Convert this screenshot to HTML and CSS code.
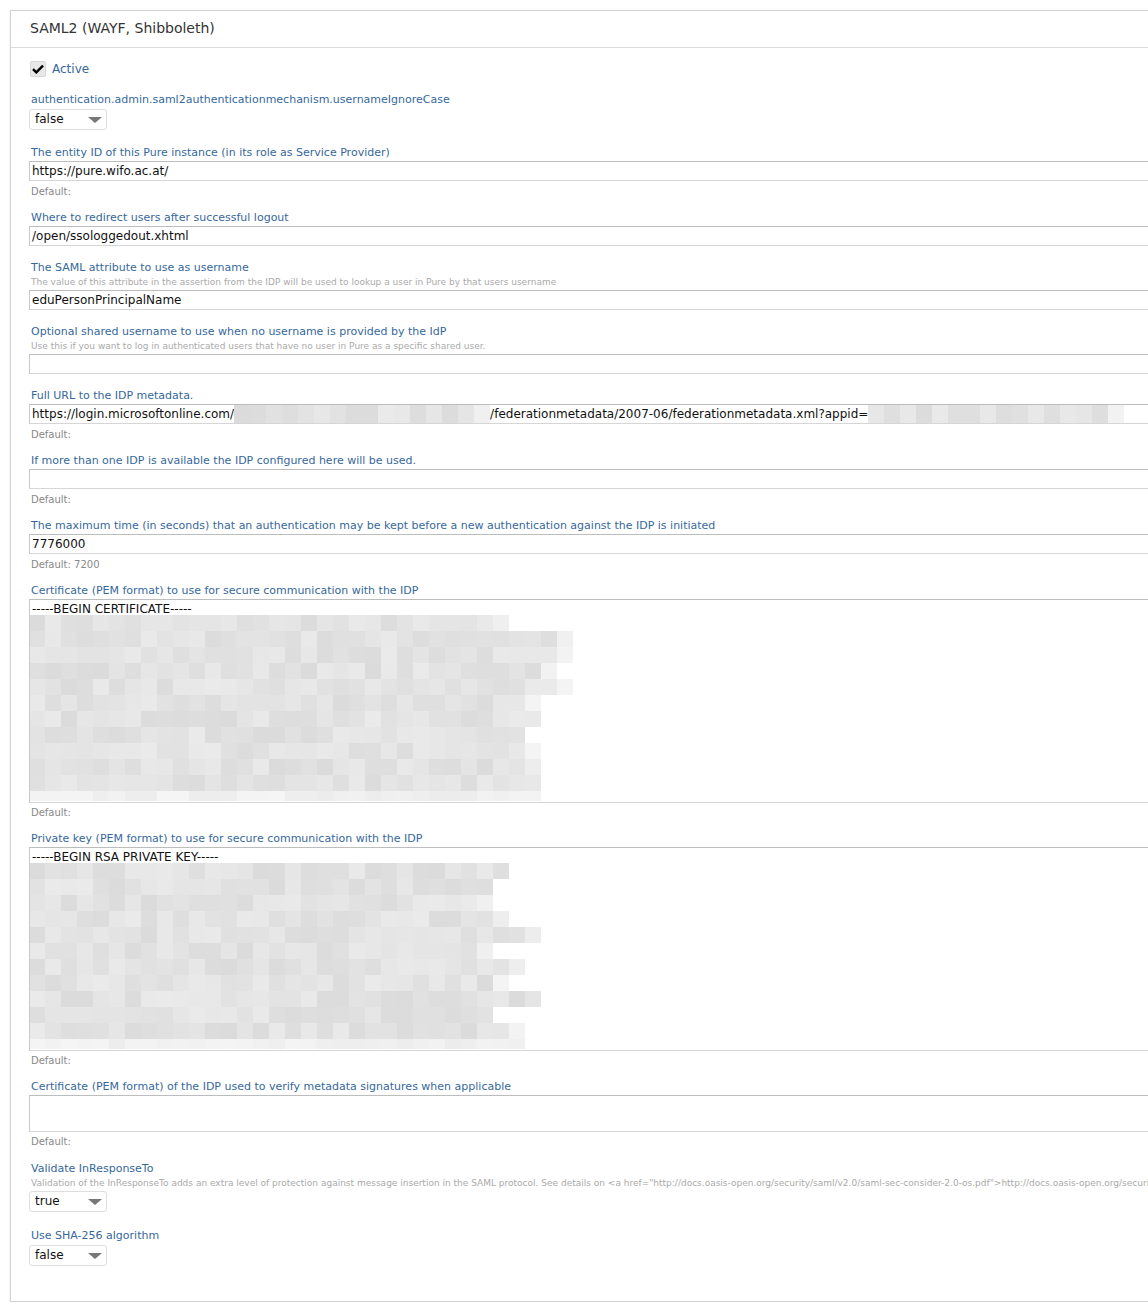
FILE: index.html
```html
<!DOCTYPE html>
<html lang="en">
<head>
    <meta charset="UTF-8" />
    <title>SAML2 (WAYF, Shibboleth)</title>
    <link rel="stylesheet" href="styles.css">
</head>
<body>
    <div class="panel">
        <div class="panel-header">
            <h2>SAML2 (WAYF, Shibboleth)</h2>
        </div>
        <div class="panel-body">
            <label class="checkbox-row">
                <span class="checkbox">
                    <svg width="12" height="10" viewBox="0 0 12 10"><path d="M1 5.2 L4.3 8.4 L11 1.6" fill="none" stroke="#000" stroke-width="2.4"/></svg>
                </span>
                <span class="checkbox-text">Active</span>
            </label>

            <div class="field">
                <div class="field-label">authentication.admin.saml2authenticationmechanism.usernameIgnoreCase</div>
                <div class="select">false<span class="select-arrow"></span></div>
            </div>

            <div class="field with-default">
                <div class="field-label">The entity ID of this Pure instance (in its role as Service Provider)</div>
                <div class="text-input">https://pure.wifo.ac.at/</div>
                <div class="field-default">Default:</div>
            </div>

            <div class="field">
                <div class="field-label">Where to redirect users after successful logout</div>
                <div class="text-input">/open/ssologgedout.xhtml</div>
            </div>

            <div class="field">
                <div class="field-label">The SAML attribute to use as username</div>
                <div class="field-help">The value of this attribute in the assertion from the IDP will be used to lookup a user in Pure by that users username</div>
                <div class="text-input">eduPersonPrincipalName</div>
            </div>

            <div class="field">
                <div class="field-label">Optional shared username to use when no username is provided by the IdP</div>
                <div class="field-help">Use this if you want to log in authenticated users that have no user in Pure as a specific shared user.</div>
                <div class="text-input"></div>
            </div>

            <div class="field with-default">
                <div class="field-label">Full URL to the IDP metadata.</div>
                <div class="text-input">https://login.microsoftonline.com/<span class="mosaic-inline" data-cells="16"></span>/federationmetadata/2007-06/federationmetadata.xml?appid=<span class="mosaic-inline" data-cells="16"></span></div>
                <div class="field-default">Default:</div>
            </div>

            <div class="field with-default">
                <div class="field-label">If more than one IDP is available the IDP configured here will be used.</div>
                <div class="text-input"></div>
                <div class="field-default">Default:</div>
            </div>

            <div class="field with-default">
                <div class="field-label">The maximum time (in seconds) that an authentication may be kept before a new authentication against the IDP is initiated</div>
                <div class="text-input">7776000</div>
                <div class="field-default">Default: 7200</div>
            </div>

            <div class="field with-default">
                <div class="field-label">Certificate (PEM format) to use for secure communication with the IDP</div>
                <div class="text-area">
                    <div class="text-line">-----BEGIN CERTIFICATE-----</div>
                    <div class="mosaic" data-rows="30,34,34,33,34,32,32,31,32,32,32,32" data-seed="7"></div>
                </div>
                <div class="field-default">Default:</div>
            </div>

            <div class="field with-default">
                <div class="field-label">Private key (PEM format) to use for secure communication with the IDP</div>
                <div class="text-area">
                    <div class="text-line">-----BEGIN RSA PRIVATE KEY-----</div>
                    <div class="mosaic" data-rows="30,29,29,30,32,29,31,30,32,29,31,31" data-seed="19"></div>
                </div>
                <div class="field-default">Default:</div>
            </div>

            <div class="field with-default">
                <div class="field-label">Certificate (PEM format) of the IDP used to verify metadata signatures when applicable</div>
                <div class="text-area small"></div>
                <div class="field-default">Default:</div>
            </div>

            <div class="field field-spaced">
                <div class="field-label">Validate InResponseTo</div>
                <div class="field-help">Validation of the InResponseTo adds an extra level of protection against message insertion in the SAML protocol. See details on &lt;a href="http://docs.oasis-open.org/security/saml/v2.0/saml-sec-consider-2.0-os.pdf"&gt;http://docs.oasis-open.org/security/saml/v2.0/saml-sec-consider-2.0-os.pdf&lt;/a&gt;</div>
                <div class="select">true<span class="select-arrow"></span></div>
            </div>

            <div class="field">
                <div class="field-label">Use SHA-256 algorithm</div>
                <div class="select">false<span class="select-arrow"></span></div>
            </div>
        </div>
    </div>

    <script>
        // blurred (pixelated) secrets, drawn as grey squares
        let seed = 1;
        function rand() {
            seed = (seed * 16807) % 2147483647;
            return seed / 2147483647;
        }

        function grey(light) {
            const v = Math.round(light ? 236 + rand() * 9 : 219 + rand() * 15);
            return `rgb(${v},${v},${v})`;
        }

        document.querySelectorAll('.mosaic').forEach(box => {
            seed = parseInt(box.dataset.seed);
            const rows = box.dataset.rows.split(',').map(Number);
            rows.forEach((count, r) => {
                const row = document.createElement('div');
                row.className = 'mosaic-row';
                if (r === rows.length - 1) row.classList.add('last');
                for (let i = 0; i < count; i++) {
                    const cell = document.createElement('span');
                    cell.className = 'mosaic-cell';
                    const light = r === rows.length - 1 || (i === count - 1 && rand() > 0.5);
                    cell.style.background = grey(light);
                    row.appendChild(cell);
                }
                box.appendChild(row);
            });
        });

        seed = 31;
        document.querySelectorAll('.mosaic-inline').forEach(box => {
            const count = parseInt(box.dataset.cells);
            for (let i = 0; i < count; i++) {
                const cell = document.createElement('span');
                cell.className = 'mosaic-cell tall';
                cell.style.background = grey(i === count - 1);
                box.appendChild(cell);
            }
        });
    </script>
</body>
</html>
```

FILE: styles.css
```css
html,
body {
    margin: 0;
    background: #fff;
    overflow: hidden;
    font-family: "DejaVu Sans", "Noto Sans", sans-serif;
}

.panel {
    margin: 10px 0 0 10px;
    width: 1200px;
    border: 1px solid #d2d2d2;
    box-shadow: 0 1px 3px rgba(0, 0, 0, 0.08);
    background: #fff;
}

.panel-header {
    border-bottom: 1px solid #dcdcdc;
    padding: 0 19px 1px;
}

.panel-header h2 {
    margin: 0;
    font-size: 14px;
    font-weight: normal;
    line-height: 35px;
    color: #333;
}

.panel-body {
    padding: 13px 18px 34px 18px;
}

.checkbox-row {
    display: flex;
    align-items: center;
    height: 16px;
    margin-bottom: 15px;
    padding-left: 1px;
}

.checkbox {
    width: 16px;
    height: 16px;
    box-sizing: border-box;
    background: #e8e8e8;
    border: 1px solid #d8d8d8;
    border-radius: 2px;
    display: flex;
    align-items: center;
    justify-content: center;
}

.checkbox-text {
    margin-left: 6px;
    font-size: 12px;
    color: #36689c;
}

.field {
    display: flow-root;
    margin-bottom: 14px;
}

.field.with-default {
    margin-bottom: 12px;
}

.field.field-spaced {
    padding-top: 1px;
    margin-bottom: 15px;
}

.field:last-child {
    margin-bottom: 0;
}

.field-label {
    font-size: 11px;
    line-height: 15px;
    color: #36689c;
    padding-left: 2px;
    margin-bottom: 1px;
    white-space: nowrap;
}

.field-help {
    font-size: 9px;
    line-height: 12px;
    color: #aaa;
    padding-left: 2px;
    margin-bottom: 2px;
    white-space: nowrap;
}

.field-default {
    font-size: 10px;
    line-height: 12px;
    color: #888;
    padding-left: 2px;
    margin-top: 5px;
}

.text-area + .field-default {
    margin-top: 4px;
}

.text-input {
    height: 20px;
    box-sizing: border-box;
    border: 1px solid #d6d6d6;
    border-top-color: #bdbdbd;
    border-left-color: #c8c8c8;
    padding: 0 2px;
    font-size: 12px;
    line-height: 20px;
    color: #111;
    white-space: nowrap;
    overflow: hidden;
    display: flex;
    align-items: center;
}

.text-area {
    height: 204px;
    box-sizing: border-box;
    border: 1px solid #d6d6d6;
    border-top-color: #bdbdbd;
    border-left-color: #c8c8c8;
    padding: 0 2px;
    font-size: 12px;
    color: #111;
    overflow: hidden;
}

.text-area.small {
    height: 37px;
}

.text-line {
    padding-top: 4px;
    line-height: 11px;
}

.mosaic {
    margin-left: -3px;
}

.mosaic-row {
    display: flex;
    height: 16px;
}

.mosaic-row.last {
    height: 10px;
}

.mosaic-cell {
    width: 16px;
    flex: none;
}

.mosaic-inline {
    display: flex;
    height: 18px;
}

.mosaic-cell.tall {
    height: 18px;
}

.select {
    position: relative;
    width: 78px;
    height: 21px;
    margin-top: 2px;
    margin-bottom: 1px;
    box-sizing: border-box;
    border: 1px solid #dedede;
    border-radius: 3px;
    padding-left: 5px;
    font-size: 12px;
    line-height: 19px;
    color: #111;
}

.select-arrow {
    position: absolute;
    right: 4px;
    top: 7px;
    width: 0;
    height: 0;
    border-left: 7px solid transparent;
    border-right: 7px solid transparent;
    border-top: 6px solid #777;
}
```
